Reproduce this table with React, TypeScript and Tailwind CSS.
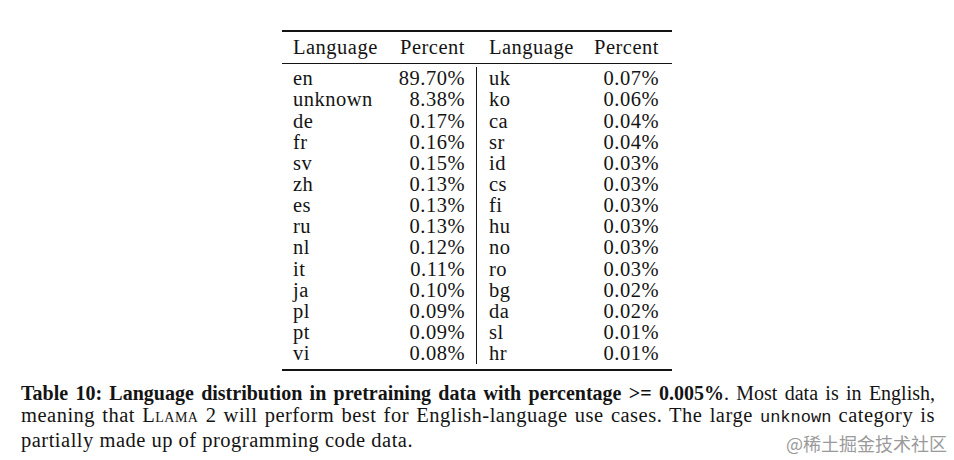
const left: [string, string][] = [
  ["en", "89.70%"],
  ["unknown", "8.38%"],
  ["de", "0.17%"],
  ["fr", "0.16%"],
  ["sv", "0.15%"],
  ["zh", "0.13%"],
  ["es", "0.13%"],
  ["ru", "0.13%"],
  ["nl", "0.12%"],
  ["it", "0.11%"],
  ["ja", "0.10%"],
  ["pl", "0.09%"],
  ["pt", "0.09%"],
  ["vi", "0.08%"],
];

const right: [string, string][] = [
  ["uk", "0.07%"],
  ["ko", "0.06%"],
  ["ca", "0.04%"],
  ["sr", "0.04%"],
  ["id", "0.03%"],
  ["cs", "0.03%"],
  ["fi", "0.03%"],
  ["hu", "0.03%"],
  ["no", "0.03%"],
  ["ro", "0.03%"],
  ["bg", "0.02%"],
  ["da", "0.02%"],
  ["sl", "0.01%"],
  ["hr", "0.01%"],
];

function Half({ rows, first }: { rows: [string, string][]; first?: boolean }) {
  return (
    <div className={first ? "pl-[11px] pr-[11px]" : "pl-[12px] pr-[13px]"}>
      {rows.map(([lang, pct]) => (
        <div key={lang} className="flex h-[21.15px] items-center">
          <span className="w-[100px]">{lang}</span>
          <span className={first ? "w-[72px] text-right" : "w-[70px] text-right"}>{pct}</span>
        </div>
      ))}
    </div>
  );
}

export default function App() {
  return (
    <div className="relative h-[460px] w-[954px] overflow-hidden bg-white font-['Liberation_Serif',serif] text-[#141414]">
      <div className="ml-[282px] mt-[30px] w-[390px] text-[20.5px] leading-none tracking-[0.5px]">
        <div className="h-[2px] bg-[#141414]" />
        <div className="flex h-[31px] items-center">
          <div className="flex pl-[11px] pr-[11px]">
            <span className="w-[100px]">Language</span>
            <span className="w-[72px] text-right">Percent</span>
          </div>
          <div className="w-px" />
          <div className="flex pl-[12px] pr-[13px]">
            <span className="w-[100px]">Language</span>
            <span className="w-[70px] text-right">Percent</span>
          </div>
        </div>
        <div className="h-px bg-[#141414]" />
        <div className="flex pt-[4px] pb-[5px]">
          <Half rows={left} first />
          <div className="-mt-[1px] w-px bg-[#141414]" />
          <Half rows={right} />
        </div>
        <div className="h-[2px] bg-[#141414]" />
      </div>

      <div className="ml-[21px] mt-[11px] w-[914px] text-[20.5px] leading-[22px] tracking-[0.5px]">
        <div className="whitespace-nowrap text-justify text-[20px] tracking-normal [text-align-last:justify]">
          <b>Table 10: Language distribution in pretraining data with percentage &gt;= 0.005%</b>. Most data is in English,
        </div>
        <div className="text-justify [text-align-last:justify]">
          meaning that <span className="[font-variant-caps:small-caps]">Llama 2</span> will perform best for English-language use cases. The large{" "}
          <span className="font-['Liberation_Mono',monospace] text-[17px] tracking-normal">unknown</span> category is
        </div>
        <div>partially made up of programming code data.</div>
      </div>

      <div className="absolute right-[7px] top-[432px] font-['Noto_Sans_CJK_SC',sans-serif] text-[18px] leading-[22px] text-[#9a9a9a]">
        @稀土掘金技术社区
      </div>
    </div>
  );
}
